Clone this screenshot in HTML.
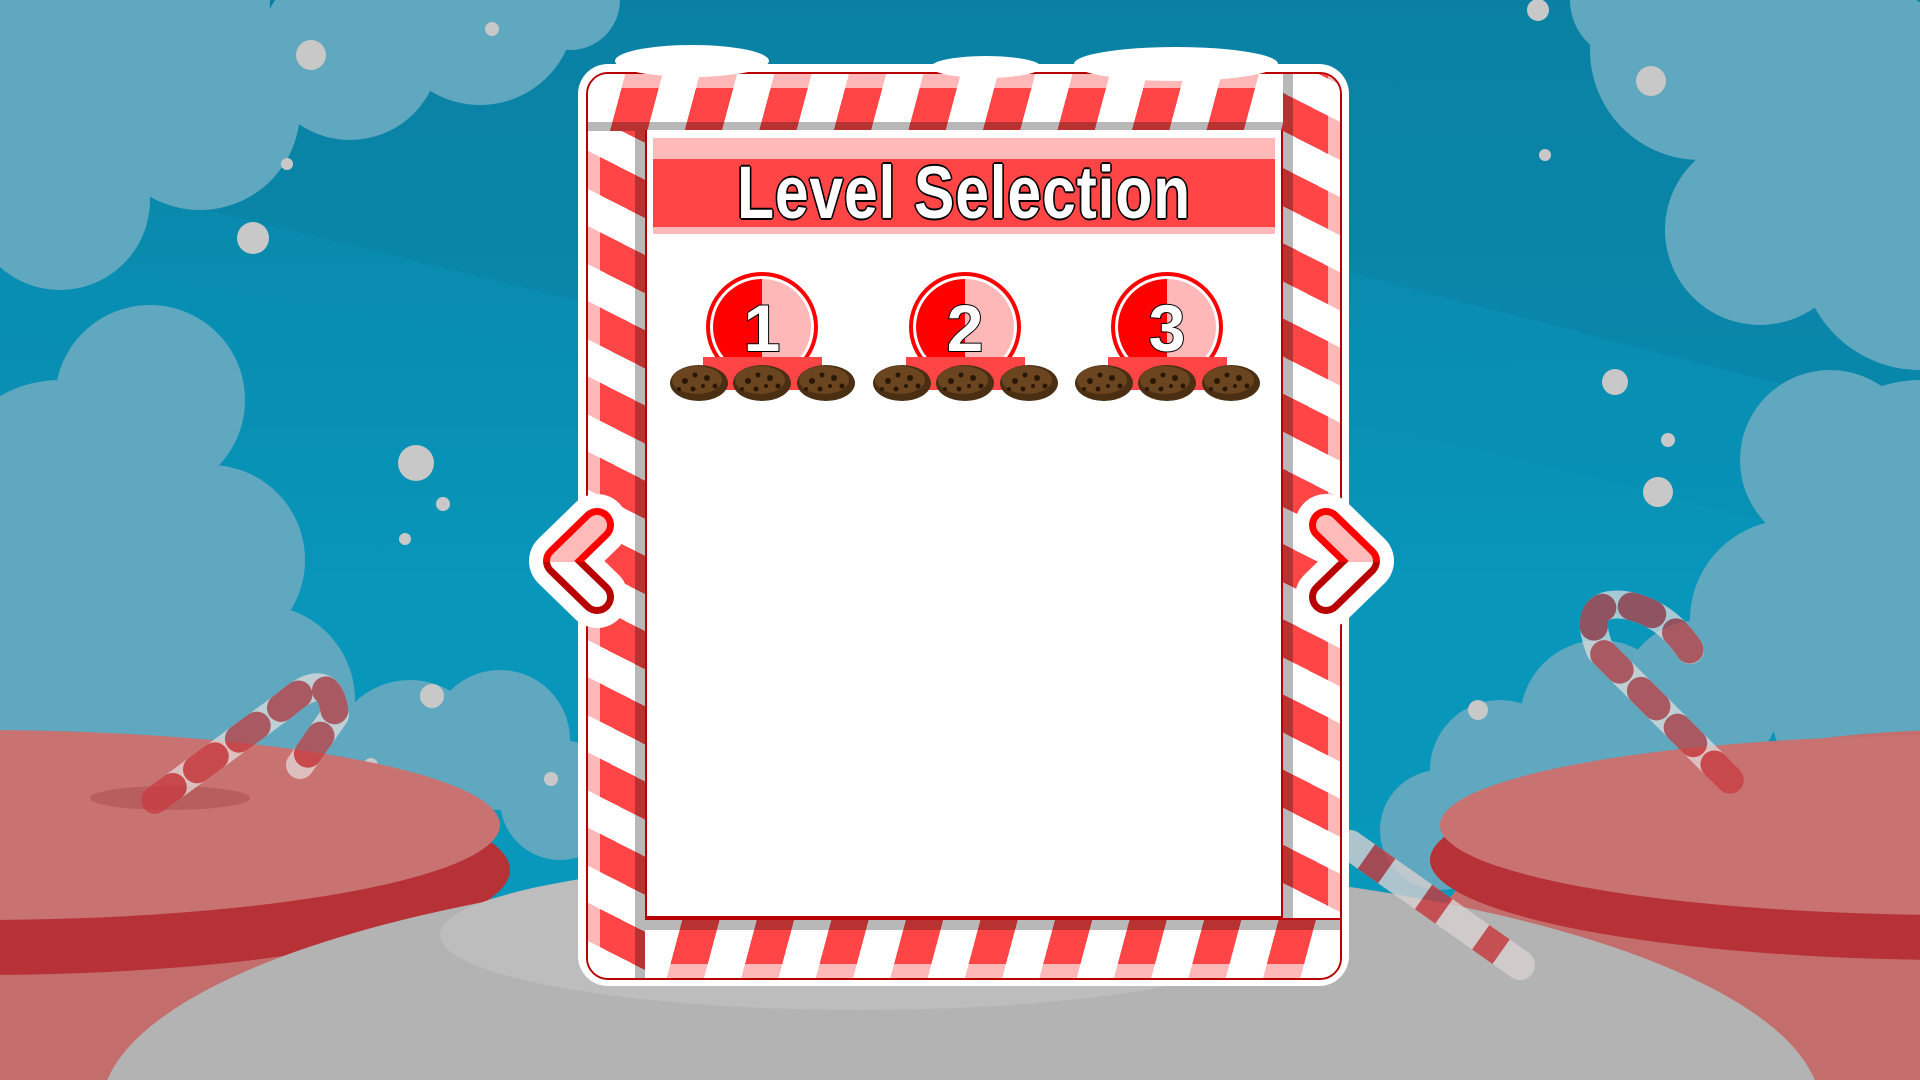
<!DOCTYPE html>
<html><head><meta charset="utf-8"><style>
*{margin:0;padding:0;box-sizing:border-box}
html,body{width:1920px;height:1080px;overflow:hidden;background:#0891b4;position:relative}
#bg{position:absolute;left:0;top:0}
.frame-out{position:absolute;left:578px;top:64px;width:771px;height:922px;background:#fff;border-radius:30px}
.frame{position:absolute;left:586px;top:72px;width:756px;height:908px;border:2px solid #b80000;border-radius:22px;overflow:hidden;background:#fff}
.bar{position:absolute;overflow:hidden}
.h{background:repeating-linear-gradient(105deg,#fff 0 36px,#ff4545 36px 72px)}
.v{background:repeating-linear-gradient(27deg,#fff 0 33px,#ff4545 33px 67px)}
.lt2{position:absolute;background:rgba(255,255,255,.62)}
.dk{position:absolute;background:#b8b8b8;mix-blend-mode:multiply}
.panel{position:absolute;left:57px;top:56px;width:638px;height:788px;background:#fff;border-left:2px solid #b80000;border-right:2px solid #b80000;border-bottom:2px solid #b80000}
.title{position:absolute;left:653px;top:138px;width:622px;height:96px;background:#ffb9b9}
.title .band{position:absolute;left:0;top:21px;width:100%;height:68px;background:#ff4545}
.title .t{position:absolute;left:0;top:12px;width:100%;text-align:center;font:bold 74px "Liberation Sans Narrow","Liberation Sans",sans-serif;color:#fff;letter-spacing:1px;transform:scaleX(.82);text-shadow:-2px 0 #000,2px 0 #000,0 -2px #000,0 2px #000,-1px -1px #000,1px 1px #000,-1px 1px #000,1px -1px #000}
#fg{position:absolute;left:0;top:0}
</style></head><body>
<svg id="bg" width="1920" height="1080" viewBox="0 0 1920 1080">
<defs><linearGradient id="sky" x1="0" y1="0" x2="0" y2="1"><stop offset="0" stop-color="#0a83a6"/><stop offset=".55" stop-color="#0896ba"/><stop offset="1" stop-color="#0899bd"/></linearGradient></defs>
<rect width="1920" height="1080" fill="url(#sky)"/>
<polygon points="0,160 700,330 1300,260 1920,420 1920,0 0,0" fill="#0a7fa2" opacity=".5"/>
<polygon points="0,330 600,420 1200,380 1920,560 1920,470 1250,300 600,360 0,250" fill="#0790b4" opacity=".6"/>
<g fill="#5fa8bf">
<circle cx="0" cy="100" r="130"/><circle cx="60" cy="200" r="90"/><circle cx="200" cy="110" r="100"/><circle cx="150" cy="0" r="120"/><circle cx="350" cy="50" r="90"/><circle cx="480" cy="10" r="95"/><circle cx="570" cy="0" r="50"/>
<circle cx="150" cy="400" r="95"/><circle cx="60" cy="500" r="120"/><circle cx="210" cy="560" r="95"/><circle cx="100" cy="700" r="140"/><circle cx="260" cy="700" r="95"/><circle cx="80" cy="900" r="160"/><circle cx="300" cy="820" r="90"/>
<circle cx="410" cy="760" r="80"/><circle cx="500" cy="740" r="70"/><circle cx="560" cy="800" r="60"/>
<circle cx="1700" cy="50" r="110"/><circle cx="1850" cy="100" r="120"/><circle cx="1760" cy="230" r="95"/><circle cx="1920" cy="250" r="120"/><circle cx="1630" cy="0" r="60"/>
<circle cx="1830" cy="460" r="90"/><circle cx="1920" cy="500" r="120"/><circle cx="1790" cy="620" r="100"/><circle cx="1900" cy="700" r="130"/>
<circle cx="1500" cy="770" r="70"/><circle cx="1600" cy="720" r="80"/><circle cx="1700" cy="700" r="80"/><circle cx="1440" cy="830" r="60"/>
</g>
<g fill="#c8c8c8">
<circle cx="311" cy="55" r="15"/><circle cx="253" cy="238" r="16"/><circle cx="416" cy="463" r="18"/><circle cx="1651" cy="81" r="15"/><circle cx="1615" cy="382" r="13"/><circle cx="1658" cy="492" r="15"/><circle cx="1478" cy="710" r="10"/><circle cx="432" cy="696" r="12"/><circle cx="287" cy="164" r="6"/><circle cx="492" cy="29" r="7"/><circle cx="1538" cy="10" r="11"/><circle cx="443" cy="504" r="7"/><circle cx="405" cy="539" r="6"/><circle cx="1616" cy="780" r="10"/><circle cx="551" cy="779" r="7"/><circle cx="371" cy="765" r="7"/><circle cx="1668" cy="440" r="7"/><circle cx="1545" cy="155" r="6"/>
</g>
<ellipse cx="-20" cy="980" rx="540" ry="250" fill="#c46d6d"/>
<ellipse cx="-20" cy="870" rx="530" ry="105" fill="#b73236"/>
<ellipse cx="-20" cy="825" rx="520" ry="95" fill="#c87272"/>
<ellipse cx="170" cy="798" rx="80" ry="12" fill="#b95e5e"/>
<ellipse cx="1960" cy="980" rx="540" ry="250" fill="#c46d6d"/>
<ellipse cx="1960" cy="860" rx="530" ry="100" fill="#b73236"/>
<ellipse cx="1960" cy="825" rx="520" ry="90" fill="#c87272"/>
<g fill="none" stroke-linecap="round" stroke-linejoin="round" opacity=".7">
<path d="M155,800 L285,705 Q330,665 335,715 L300,765" stroke="#e8e0e0" stroke-width="28"/>
<path d="M155,800 L285,705 Q330,665 335,715 L300,765" stroke="#c9383c" stroke-width="28" stroke-dasharray="22 30"/>
<path d="M1730,780 L1600,650 Q1580,600 1625,605 Q1665,612 1690,650" stroke="#e8e0e0" stroke-width="28"/>
<path d="M1730,780 L1600,650 Q1580,600 1625,605 Q1665,612 1690,650" stroke="#c9383c" stroke-width="28" stroke-dasharray="22 30"/>
</g>
<ellipse cx="961" cy="1110" rx="860" ry="250" fill="#b3b3b3"/>
<ellipse cx="860" cy="935" rx="420" ry="75" fill="#bdbdbd"/>
<g opacity=".8">
<path d="M1350,845 L1520,965" stroke="#d8d0d0" stroke-width="30" stroke-linecap="round"/>
<path d="M1350,845 L1520,965" stroke="#c9383c" stroke-width="30" stroke-dasharray="25 45" stroke-dashoffset="-20"/>
</g>
</svg>

<div class="frame-out"></div>
<div class="frame">
  <div class="bar h" style="left:0;top:0;width:695px;height:57px">
    <div class="lt2" style="left:0;top:0;width:100%;height:14px"></div>
    <div class="dk" style="left:0;bottom:0;width:100%;height:9px"></div>
  </div>
  <div class="bar v" style="left:695px;top:0;width:57px;height:846px">
    <div class="dk" style="left:0;top:0;width:10px;height:100%"></div>
    <div class="lt2" style="right:0;top:0;width:12px;height:100%"></div>
  </div>
  <div class="bar v" style="left:0;top:57px;width:57px;height:847px">
    <div class="lt2" style="left:0;top:0;width:12px;height:100%"></div>
    <div class="dk" style="right:0;top:0;width:10px;height:100%"></div>
  </div>
  <div class="bar h" style="left:57px;top:844px;width:697px;height:60px;border-top:2px solid #b80000">
    <div class="dk" style="left:0;top:0;width:100%;height:10px"></div>
    <div class="lt2" style="left:0;bottom:0;width:100%;height:14px"></div>
  </div>
  <div class="panel"></div>
</div>
<div class="title"><div class="band"></div><div class="t">Level Selection</div></div>

<svg id="fg" width="1920" height="1080" viewBox="0 0 1920 1080">
<defs>
<linearGradient id="ao" gradientUnits="userSpaceOnUse" x1="0" y1="512" x2="0" y2="612"><stop offset=".5" stop-color="#ff0000"/><stop offset=".5" stop-color="#b80000"/></linearGradient>
<linearGradient id="ai" gradientUnits="userSpaceOnUse" x1="0" y1="512" x2="0" y2="612"><stop offset=".5" stop-color="#ffbaba"/><stop offset=".5" stop-color="#ffffff"/></linearGradient>
<g id="cookie">
<ellipse cx="0" cy="0" rx="29" ry="18" fill="#4a2f12"/>
<ellipse cx="-2" cy="-3" rx="25" ry="14" fill="#6b4420"/>
<g fill="#2a1806"><circle cx="-14" cy="-2" r="3"/><circle cx="-4" cy="-8" r="2.5"/><circle cx="8" cy="-5" r="3"/><circle cx="16" cy="3" r="2.5"/><circle cx="-6" cy="6" r="2.5"/><circle cx="4" cy="3" r="2"/><circle cx="-20" cy="6" r="2"/></g>
</g>
</defs>
<ellipse cx="692" cy="61" rx="77" ry="16" fill="#fff"/>
<ellipse cx="986" cy="67" rx="55" ry="11" fill="#fff"/>
<ellipse cx="1176" cy="64" rx="102" ry="17" fill="#fff"/>
<g fill="none" stroke-linecap="round" stroke-linejoin="round">
<polyline points="597,525 560,561 597,597" stroke="#fff" stroke-width="62"/>
<polyline points="597,525 560,561 597,597" stroke="url(#ao)" stroke-width="34"/>
<polyline points="597,525 560,561 597,597" stroke="url(#ai)" stroke-width="20"/>
<polyline points="1326,525 1363,561 1326,597" stroke="#fff" stroke-width="62"/>
<polyline points="1326,525 1363,561 1326,597" stroke="url(#ao)" stroke-width="34"/>
<polyline points="1326,525 1363,561 1326,597" stroke="url(#ai)" stroke-width="20"/>
</g>
<g font-family="Liberation Sans Narrow, Liberation Sans, sans-serif" font-weight="bold" font-size="66" text-anchor="middle" fill="#fff" stroke="#000" stroke-width="2" paint-order="stroke">
<g transform="translate(762,327)">
<ellipse rx="56" ry="55" fill="#ff0000" stroke="none"/><ellipse rx="52" ry="51" fill="#fff" stroke="none"/>
<path d="M0,-48 A49,48 0 0 1 0,48 Z" fill="#ffb8b8" stroke="none"/><path d="M0,-48 A49,48 0 0 0 0,48 Z" fill="#ff0000" stroke="none"/>
<text x="0" y="24">1</text>
</g>
<g transform="translate(965,327)">
<ellipse rx="56" ry="55" fill="#ff0000" stroke="none"/><ellipse rx="52" ry="51" fill="#fff" stroke="none"/>
<path d="M0,-48 A49,48 0 0 1 0,48 Z" fill="#ffb8b8" stroke="none"/><path d="M0,-48 A49,48 0 0 0 0,48 Z" fill="#ff0000" stroke="none"/>
<text x="0" y="24">2</text>
</g>
<g transform="translate(1167,327)">
<ellipse rx="56" ry="55" fill="#ff0000" stroke="none"/><ellipse rx="52" ry="51" fill="#fff" stroke="none"/>
<path d="M0,-48 A49,48 0 0 1 0,48 Z" fill="#ffb8b8" stroke="none"/><path d="M0,-48 A49,48 0 0 0 0,48 Z" fill="#ff0000" stroke="none"/>
<text x="0" y="24">3</text>
</g>
</g>
<g fill="#ff4545"><rect x="703" y="357" width="119" height="33"/><rect x="906" y="357" width="119" height="33"/><rect x="1108" y="357" width="119" height="33"/></g>
<use href="#cookie" x="699" y="383"/><use href="#cookie" x="762" y="383"/><use href="#cookie" x="826" y="383"/>
<use href="#cookie" x="902" y="383"/><use href="#cookie" x="965" y="383"/><use href="#cookie" x="1029" y="383"/>
<use href="#cookie" x="1104" y="383"/><use href="#cookie" x="1167" y="383"/><use href="#cookie" x="1231" y="383"/>
</svg>
</body></html>
